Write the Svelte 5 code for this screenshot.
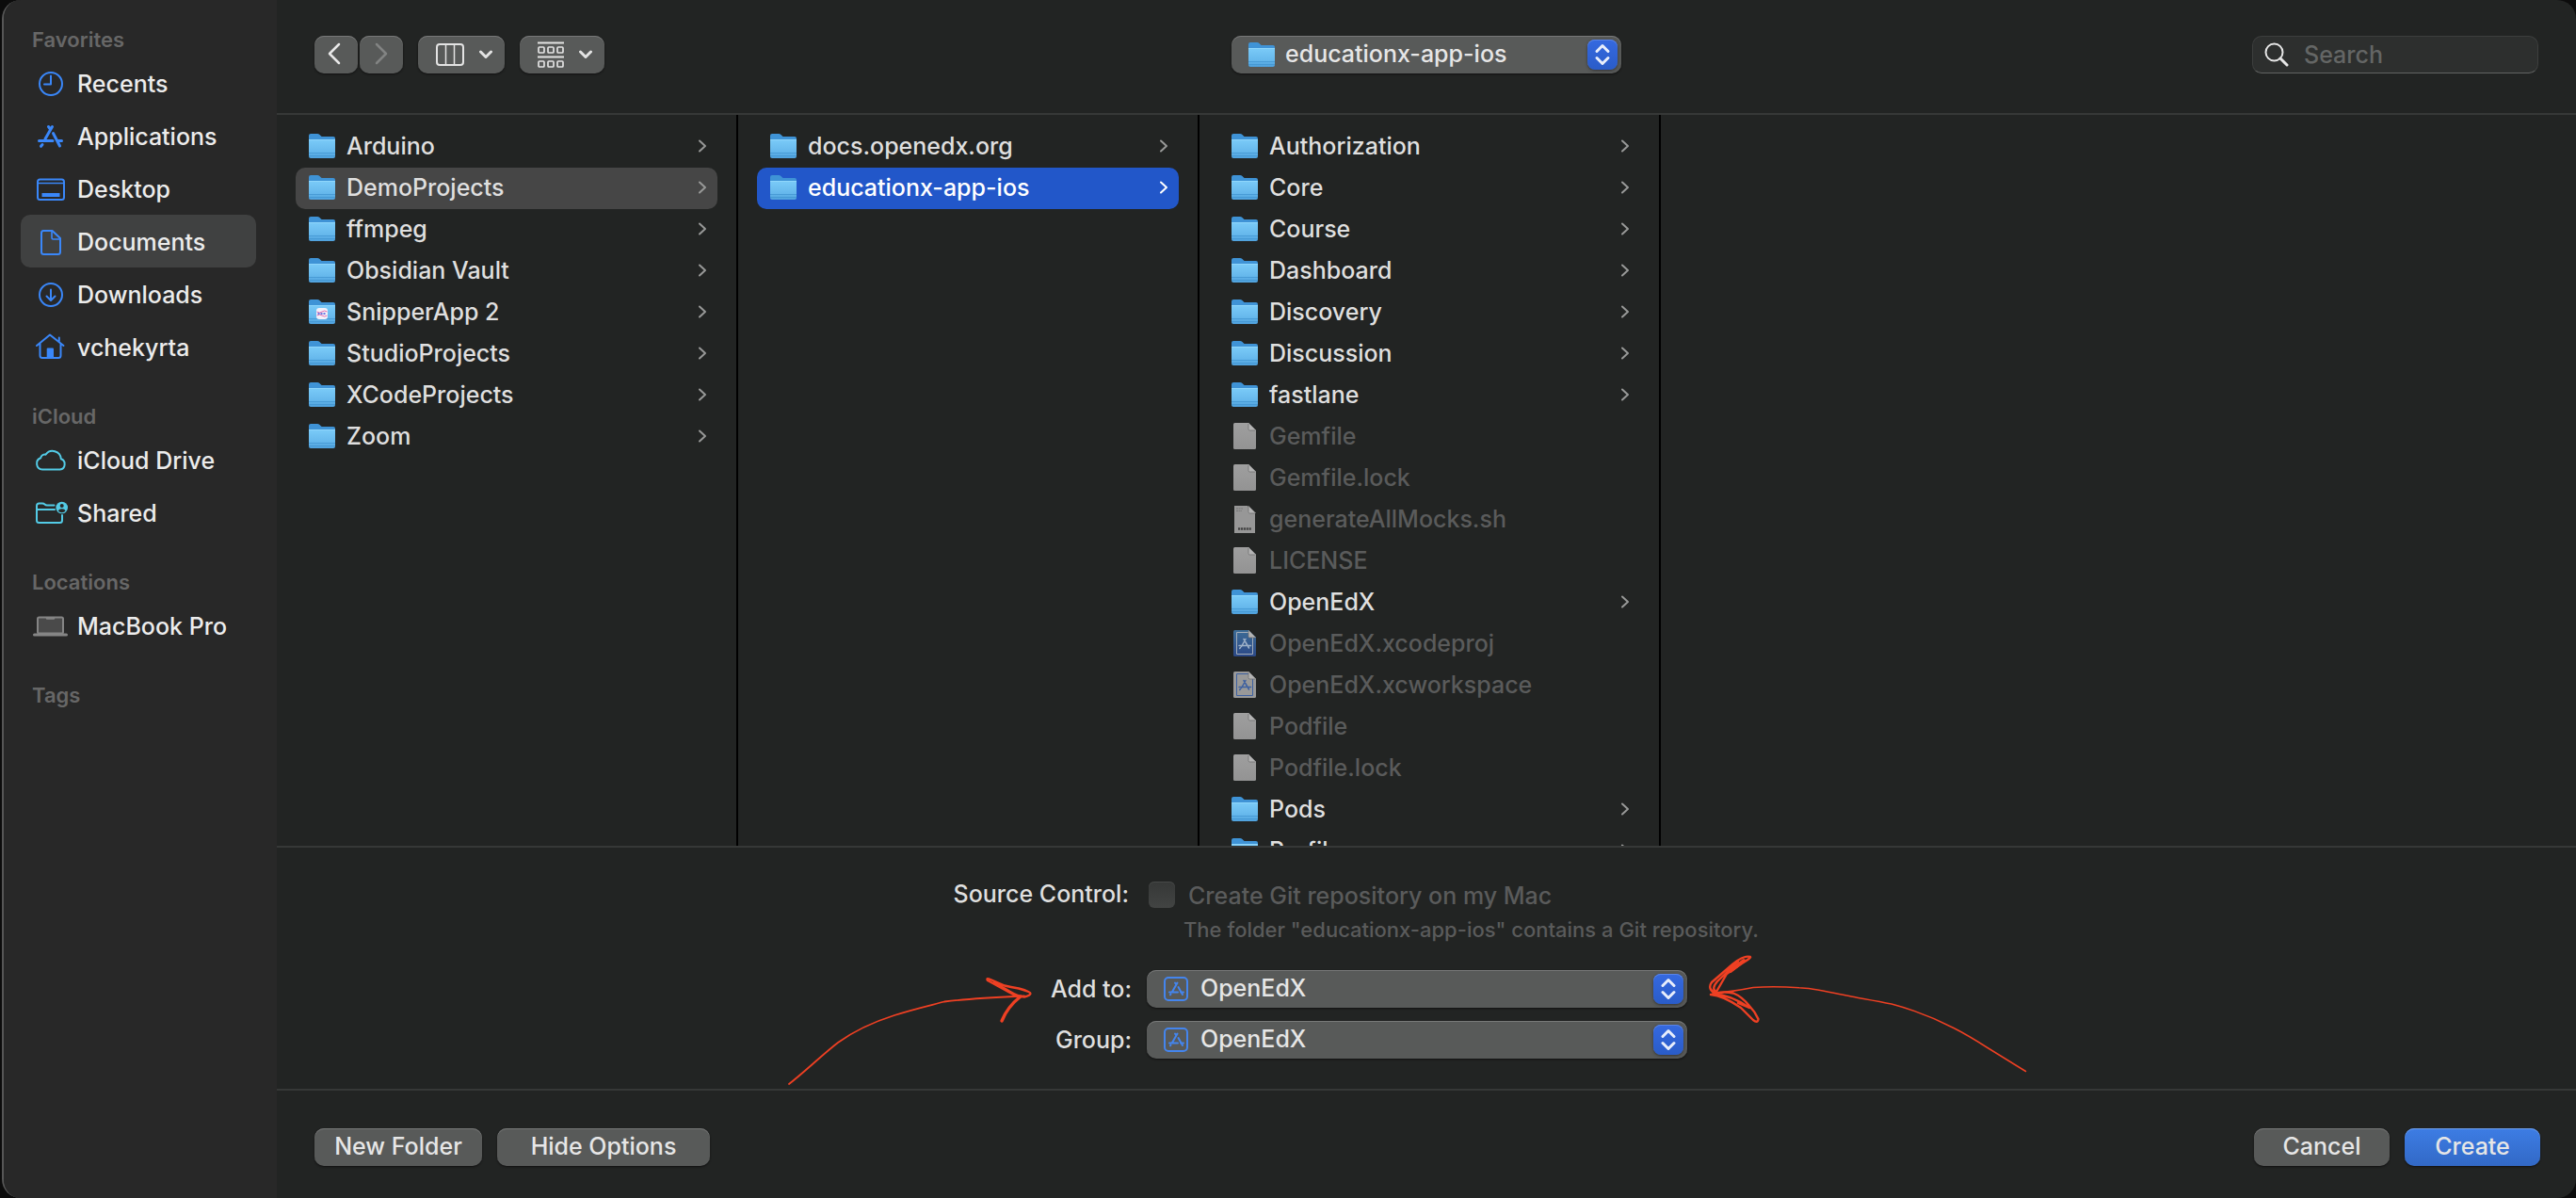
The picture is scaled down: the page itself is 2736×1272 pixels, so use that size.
<script>
  const sections = [
    {
      title: 'Favorites',
      items: [
        { name: 'Recents', icon: 'clock' },
        { name: 'Applications', icon: 'apps' },
        { name: 'Desktop', icon: 'desktop' },
        { name: 'Documents', icon: 'document' },
        { name: 'Downloads', icon: 'download' },
        { name: 'vchekyrta', icon: 'home' }
      ]
    },
    {
      title: 'iCloud',
      items: [
        { name: 'iCloud Drive', icon: 'cloud' },
        { name: 'Shared', icon: 'shared' }
      ]
    },
    { title: 'Locations', items: [{ name: 'MacBook Pro', icon: 'laptop' }] },
    { title: 'Tags', items: [] }
  ];

  const folder = (name, extra = {}) => ({ name, kind: 'folder', ...extra });
  const file = (name, kind = 'file') => ({ name, kind });

  const columns = [
    [
      folder('Arduino'),
      folder('DemoProjects', { state: 'open' }),
      folder('ffmpeg'),
      folder('Obsidian Vault'),
      folder('SnipperApp 2', { badge: true }),
      folder('StudioProjects'),
      folder('XCodeProjects'),
      folder('Zoom')
    ],
    [folder('docs.openedx.org'), folder('educationx-app-ios', { state: 'selected' })],
    [
      folder('Authorization'),
      folder('Core'),
      folder('Course'),
      folder('Dashboard'),
      folder('Discovery'),
      folder('Discussion'),
      folder('fastlane'),
      file('Gemfile'),
      file('Gemfile.lock'),
      file('generateAllMocks.sh', 'shell'),
      file('LICENSE'),
      folder('OpenEdX'),
      file('OpenEdX.xcodeproj', 'project'),
      file('OpenEdX.xcworkspace', 'workspace'),
      file('Podfile'),
      file('Podfile.lock'),
      folder('Pods'),
      folder('Profile')
    ]
  ];

  let place = $state('Documents');
</script>

{#snippet folderIcon(badge)}
  <svg class="file-icon" viewBox="0 0 28 28" aria-hidden="true">
    <path d="M0 3q0-2 2-2h7q1.500 0 2.500 1l1.500 1.500q.5.500 1.500.500H26q2 0 2 2v4H0z" fill="#3f93d6" />
    <path d="M0 7.500q0-.5.800-.5h26.400q.8 0 .8.500V25q0 2-2 2H2q-2 0-2-2z" fill="url(#folder-face)" />
    <path d="M0 7.500h28" stroke="#8fd6fb" stroke-width="1" />
    <path d="M0 21.500h28M0 24.500h28" stroke="#3f93cf" stroke-width="1" opacity=".7" />
    {#if badge}
      <rect x="8" y="10" width="12" height="12" rx="3" fill="#f4f1fa" />
      <path d="M8.500 14q3 2 5.500 0t5.500 0M8.500 18q3-2 5.500 0t5.500 0" fill="none" stroke="#e66fae" stroke-width="1" />
      <path d="M9.500 16h9" stroke="#6a78e0" stroke-width="2" stroke-dasharray="2 1" />
    {/if}
  </svg>
{/snippet}

{#snippet fileIcon(kind)}
  <svg class="file-icon" viewBox="0 0 28 28" aria-hidden="true">
    {#if kind === 'project'}
      <path d="M2 1.500Q2 0 3.500 0H18l8 8v18.500q0 1.500-1.500 1.500h-21Q2 28 2 26.500z" fill="url(#project-face)" />
      <path d="M5.500 2.500h13v5h4v18h-17z" fill="none" stroke="#a3acb8" stroke-width="1" />
    {:else if kind === 'workspace'}
      <path d="M2 1.500Q2 0 3.500 0H18l8 8v18.500q0 1.500-1.500 1.500h-21Q2 28 2 26.500z" fill="#999" />
      <path d="M5.500 2.500h13v5h4v18h-17z" fill="none" stroke="#3d60a0" stroke-width="1" />
    {:else if kind === 'shell'}
      <path d="M3 0h14l8 8v21H3z" fill="#979797" />
      <path d="M5 3h7M5 5.500h6" stroke="#777" stroke-width="1.200" stroke-dasharray="2 .6" />
      <path d="M7 24.500h14" stroke="#444" stroke-width="2.600" stroke-dasharray="2.200 .7" />
    {:else}
      <path d="M2 1.500Q2 0 3.500 0H18l8 8v18.500q0 1.500-1.500 1.500h-21Q2 28 2 26.500z" fill="url(#paper-face)" />
    {/if}
    <path d="M18 0v6.500q0 1.500 1.500 1.500H26z" fill="#b4b4b4" />
    <path d="M18 1v5.500q0 1.500 1.500 1.500H25" fill="none" stroke="#707070" stroke-width=".8" />
    {#if kind === 'project' || kind === 'workspace'}
      <g
        fill="none"
        stroke={kind === 'project' ? '#9fb2c8' : '#3d60a0'}
        stroke-width="1.500"
        stroke-linecap="round"
      >
        <path d="M15 9.500l-4.500 8M13 9.500l5.500 9.500M8 16.500h7.500M18 16.500h2.500M9.500 18.500l-.8 1" />
      </g>
    {/if}
  </svg>
{/snippet}

{#snippet placeIcon(name)}
  <svg class="place-icon {name}" viewBox="0 0 40 40" aria-hidden="true">
    {#if name === 'clock'}
      <circle cx="21" cy="21" r="12" />
      <path d="M21 12.500V21.500H14" />
    {:else if name === 'apps'}
      <g stroke-width="3">
        <path d="M22.500 10.500L15 23.500M18.500 10.500l1.500 2M23.500 17.500l7 13.500M8.500 25.500H23M28 25.500h4.500M12 29.500l-1.500 1.800" />
      </g>
    {:else if name === 'desktop'}
      <rect x="7" y="10.500" width="28" height="21.500" rx="2.500" />
      <path d="M7 14.500h28" stroke-width="1.500" />
      <path d="M11.500 27h19" stroke-width="4" stroke-linecap="butt" />
    {:else if name === 'document'}
      <path d="M13 9h9.500L31 17v14.500q0 2.500-2.500 2.500h-15Q11 34 11 31.500V11.500Q11 9 13 9z" />
      <path d="M22 9v7.500q0 1.500 1.500 1.500H31" stroke-width="1.600" />
    {:else if name === 'download'}
      <circle cx="21" cy="21" r="12" />
      <path d="M21 15.500v11M16.500 22.500l4.500 4.500 4.500-4.500" />
    {:else if name === 'home'}
      <path d="M6 19L20 7.500 34.500 19M9.500 17v12.500q0 2.500 2.500 2.500h17q2.500 0 2.500-2.500V17M29.800 14.500V10.500" />
      <path d="M16.700 32V22.500q0-1 1-1h5.300q1 0 1 1V32z" fill="currentColor" stroke="none" />
    {:else if name === 'cloud'}
      <path d="M12 30.500a6.300 6.300 0 0 1-1.800-12.200 4.600 4.600 0 0 1 5.300-3.600 9 9 0 0 1 16.300 4.600 5.800 5.800 0 0 1-1 11.200z" />
    {:else if name === 'shared'}
      <path d="M24.500 12.500H17q-1.500 0-2.500-1t-2.500-1H8.500Q6 10.500 6 13v15.500Q6 31 8.500 31h22q2.500 0 2.500-2.500V23M6 17h19" />
      <circle cx="32.700" cy="15" r="6.300" fill="currentColor" stroke="none" />
      <circle cx="32.700" cy="13" r="2" fill="#282828" stroke="none" />
      <path d="M28.800 18.600q.8-2.300 3.900-2.300t3.900 2.300q-1.500 1.600-3.900 1.600t-3.900-1.600z" fill="#282828" stroke="none" />
    {:else}
      <rect x="7" y="11.500" width="27" height="17" rx="1.500" fill="#4a4a4a" />
      <path d="M17 12.500h7" stroke-width="2.500" />
      <path d="M3.500 30h34" stroke-width="3" />
    {/if}
  </svg>
{/snippet}

{#snippet stepper()}
  <svg class="stepper" viewBox="0 0 32 32" aria-hidden="true">
    <path d="M10 12.500l6-6 6 6M10 19.500l6 6 6-6" />
  </svg>
{/snippet}

{#snippet downChevron()}
  <svg width="14" height="10" viewBox="0 0 14 10" aria-hidden="true">
    <path d="M1.500 2L7 7.500 12.500 2" fill="none" stroke="#e3e3e3" stroke-width="3" stroke-linecap="round" stroke-linejoin="round" />
  </svg>
{/snippet}

{#snippet targetIcon()}
  <svg class="target-icon" viewBox="0 0 26 26" aria-hidden="true">
    <rect x="1" y="1" width="24" height="24" rx="4" />
    <path d="M14.500 6.500l-5.500 9.500M12 6.500l1 1.500M15.500 11l4.500 8M6 16.500h9M18 16.500h3M7.500 18.500l-.5.800" stroke-linecap="round" />
  </svg>
{/snippet}

<svg class="defs" aria-hidden="true">
  <defs>
    <linearGradient id="folder-face" x1="0" y1="0" x2="0" y2="1">
      <stop offset="0" stop-color="#7bcbf8" />
      <stop offset=".65" stop-color="#66b8ec" />
      <stop offset="1" stop-color="#4ea0dc" />
    </linearGradient>
    <linearGradient id="project-face" x1="0" y1="0" x2="0" y2="1">
      <stop offset="0" stop-color="#3d6c96" />
      <stop offset="1" stop-color="#2b4886" />
    </linearGradient>
    <linearGradient id="paper-face" x1="0" y1="0" x2="0" y2="1">
      <stop offset="0" stop-color="#9f9f9f" />
      <stop offset="1" stop-color="#939393" />
    </linearGradient>
  </defs>
</svg>

<div class="dialog">
  <nav class="sidebar" aria-label="Places">
    {#each sections as section}
      <section>
        <h2>{section.title}</h2>
        {#each section.items as item}
          <button class="place" class:current={place === item.name} onclick={() => (place = item.name)}>
            {@render placeIcon(item.icon)}
            <span>{item.name}</span>
          </button>
        {/each}
      </section>
    {/each}
  </nav>

  <main>
    <header class="toolbar">
      <div class="tools">
        <div class="history">
          <button class="push nav back" aria-label="Back">
            <svg width="14" height="24" viewBox="0 0 14 24"><path d="M12 2L2 12l10 10" /></svg>
          </button>
          <button class="push nav" aria-label="Forward" disabled>
            <svg width="14" height="24" viewBox="0 0 14 24"><path d="M2 2l10 10L2 22" /></svg>
          </button>
        </div>
        <button class="push view" aria-label="Column view">
          <svg width="30" height="24" viewBox="0 0 30 24" fill="none" stroke="#e3e3e3" stroke-width="2">
            <rect x="1" y="1" width="28" height="22" rx="3" />
            <path d="M10.500 1v22M19.500 1v22" stroke-width="1.500" />
          </svg>
          {@render downChevron()}
        </button>
        <button class="push view" aria-label="Group items">
          <svg width="28" height="28" viewBox="0 0 28 28" fill="none" stroke="#e3e3e3">
            <path d="M0 1.500h28M0 16.500h28" stroke-width="2" />
            {#each [0, 10, 20] as x}
              <rect x={x + 1} y="6" width="6" height="6" rx="1" stroke-width="1.700" />
              <rect x={x + 1} y="21" width="6" height="6" rx="1" stroke-width="1.700" />
            {/each}
          </svg>
          {@render downChevron()}
        </button>
      </div>

      <div class="popup">
        <select aria-label="Current folder">
          <option>educationx-app-ios</option>
        </select>
        <span class="lead">{@render folderIcon(false)}</span>
        {@render stepper()}
      </div>

      <label class="search">
        <svg width="26" height="26" viewBox="0 0 26 26" aria-hidden="true">
          <circle cx="10.500" cy="10.500" r="9" />
          <path d="M17 17l7 7" stroke-width="3" />
        </svg>
        <input type="search" placeholder="Search" aria-label="Search" />
      </label>
    </header>

    <div class="browser">
      {#each columns as column}
        <ul>
          {#each column as entry}
            <li>
              <button
                class="entry"
                class:open={entry.state === 'open'}
                class:selected={entry.state === 'selected'}
                disabled={entry.kind !== 'folder'}
              >
                {#if entry.kind === 'folder'}
                  {@render folderIcon(entry.badge)}
                {:else}
                  {@render fileIcon(entry.kind)}
                {/if}
                <span>{entry.name}</span>
                {#if entry.kind === 'folder'}
                  <svg class="more" viewBox="0 0 10 14" aria-hidden="true"><path d="M2 1.500L8 7l-6 5.500" /></svg>
                {/if}
              </button>
            </li>
          {/each}
        </ul>
      {/each}
    </div>

    <form class="options" onsubmit={(e) => e.preventDefault()}>
      <span class="caption source">Source Control:</span>
      <div class="check">
        <input type="checkbox" id="git" disabled />
        <label for="git">Create Git repository on my Mac</label>
      </div>
      <p class="hint">The folder "educationx-app-ios" contains a Git repository.</p>

      <label class="caption" for="add-to">Add to:</label>
      <div class="popup target">
        <select id="add-to"><option>OpenEdX</option></select>
        <span class="lead">{@render targetIcon()}</span>
        {@render stepper()}
      </div>

      <label class="caption group" for="group">Group:</label>
      <div class="popup target group">
        <select id="group"><option>OpenEdX</option></select>
        <span class="lead">{@render targetIcon()}</span>
        {@render stepper()}
      </div>

      <svg class="marks" viewBox="294 900 2442 256" aria-hidden="true">
        <path d="M838 1151C856 1137 872 1121 890 1107C908 1094 928 1085 950 1078C968 1072 990 1067 1003 1063.500C1030 1060 1055 1059 1088 1057.500" stroke-width="1.800" />
        <path d="M1080 1058L1049 1041Q1047 1038 1052 1040L1067 1046.500Q1073 1048 1082 1049.500Q1095 1053 1094.500 1055T1088 1058.500Q1081 1058 1073 1053L1056 1043" stroke-width="2.400" />
        <path d="M1084 1058Q1070 1069 1064 1084" stroke-width="3.400" />
        <path d="M2151.500 1137.500L2111 1112.500Q2090 1099 2075 1091.500Q2043 1075 2009 1066C1990 1062 1970 1059 1964 1057.500C1945 1054 1925 1049 1911 1048.800Q1885 1047 1862 1048.500Q1840 1053 1822 1054" stroke-width="1.500" />
        <path d="M1822 1055Q1813 1050 1818 1043L1840 1024Q1852 1014 1859 1016Q1860 1017 1850 1023L1834 1034L1823 1053Q1817 1050 1824 1042L1846 1021" stroke-width="2.400" />
        <path d="M1852 1020L1838 1031" stroke-width="4" />
        <path d="M1817 1056Q1830 1057 1849 1070L1862 1083Q1867 1087 1867.500 1082Q1864 1074 1858 1068Q1850 1058 1841 1054.500Q1830 1052 1819 1055.500Q1838 1056 1858 1070L1846 1065" stroke-width="2.400" />
      </svg>
    </form>

    <footer>
      <div class="actions">
        <button class="push new">New Folder</button>
        <button class="push hide">Hide Options</button>
      </div>
      <div class="actions">
        <button class="push confirm">Cancel</button>
        <button class="push confirm primary">Create</button>
      </div>
    </footer>
  </main>
</div>

<style>
  :global(body) {
    background: #0c0c0c;
  }

  * {
    box-sizing: border-box;
  }

  .defs {
    position: absolute;
    width: 0;
    height: 0;
  }

  .dialog {
    display: grid;
    grid-template-columns: 290px minmax(0, 1fr);
    height: 100vh;
    min-height: 800px;
    margin-left: 2px;
    border-left: 2px solid #565656;
    border-radius: 20px;
    overflow: hidden;
    background: #222423;
    color: #dfdfdf;
    font-family: Inter, 'Liberation Sans', sans-serif;
    font-size: 25px;
    font-weight: 500;
    line-height: 32px;
  }

  button,
  input,
  select {
    font: inherit;
    color: inherit;
  }

  .sidebar {
    display: flex;
    flex-direction: column;
    gap: 26px;
    padding: 22px 22px 22px 18px;
    background: #282828;
  }

  h2 {
    margin: 0;
    padding: 2px 0 0 12px;
    color: #676767;
    font-size: 22px;
    font-weight: 600;
    line-height: 36px;
  }

  .place {
    display: flex;
    align-items: center;
    gap: 9px;
    width: 100%;
    height: 56px;
    padding: 0 11px;
    border: 0;
    border-radius: 10px;
    background: none;
    color: #ececec;
    text-align: left;
    white-space: nowrap;
  }

  .place.current {
    background: #404141;
  }

  .place span {
    padding-top: 2px;
  }

  .place-icon {
    flex: none;
    width: 40px;
    height: 40px;
    color: #3a87f9;
    fill: none;
    stroke: currentColor;
    stroke-width: 2;
    stroke-linecap: round;
    stroke-linejoin: round;
  }

  .place-icon.cloud,
  .place-icon.shared {
    color: #53cbe6;
  }

  .place-icon.laptop {
    color: #858585;
  }

  main {
    display: flex;
    flex-direction: column;
    min-width: 0;
    min-height: 0;
  }

  .toolbar {
    display: grid;
    grid-template-columns: 1fr 414px 1fr;
    align-items: center;
    padding: 38px 40px 42px;
    border-bottom: 2px solid #363837;
  }

  .tools {
    display: flex;
    gap: 16px;
  }

  .history {
    display: flex;
    gap: 2px;
  }

  .push {
    display: flex;
    align-items: center;
    justify-content: center;
    height: 40px;
    padding: 0 0 2px;
    border: 0;
    border-radius: 10px;
    background: #585a59;
    box-shadow: inset 0 1px #787979, 0 1px 2px #111;
    color: #e6e6e6;
    white-space: nowrap;
  }

  .nav {
    width: 46px;
  }

  .back {
    padding-right: 4px;
  }

  .nav path {
    fill: none;
    stroke: #e8e8e8;
    stroke-width: 2.5;
    stroke-linecap: round;
    stroke-linejoin: round;
  }

  .nav:disabled path {
    stroke: #828483;
  }

  .view {
    gap: 16px;
    padding: 0 13px 0 19px;
  }

  .popup {
    display: grid;
    grid-template-columns: minmax(0, 1fr) auto;
    align-items: center;
    height: 40px;
    border-radius: 10px;
    background: #585a59;
    box-shadow: inset 0 1px #787979, 0 1px 2px #111;
  }

  .popup select {
    grid-area: 1 / 1 / 2 / 3;
    width: 100%;
    height: 40px;
    padding: 0 44px 2px 57px;
    border: 0;
    border-radius: 10px;
    background: none;
    color: #e6e6e6;
    appearance: none;
  }

  .popup .lead {
    display: flex;
    grid-area: 1 / 1;
    padding-left: 18px;
    pointer-events: none;
  }

  .stepper {
    grid-area: 1 / 2;
    width: 32px;
    height: 32px;
    margin-right: 4px;
    border-radius: 8px;
    background: linear-gradient(#3569e0, #2a5cc8);
    box-shadow: inset 0 1px #5c86e6, 0 1px 3px #333;
    fill: none;
    stroke: #e8eefb;
    stroke-width: 3;
    stroke-linecap: round;
    stroke-linejoin: round;
    pointer-events: none;
  }

  .target-icon {
    width: 26px;
    height: 26px;
    fill: none;
    stroke: #4485ee;
    stroke-width: 2;
  }

  .search {
    display: flex;
    align-items: center;
    justify-self: end;
    gap: 16px;
    width: 304px;
    height: 40px;
    padding: 0 12px;
    border: 1px solid #3d3f3e;
    border-bottom-color: #626463;
    border-radius: 10px;
    background: #2d2f2e;
  }

  .search svg {
    flex: none;
    fill: none;
    stroke: #e6e6e6;
    stroke-width: 2;
    stroke-linecap: round;
  }

  .search input {
    width: 100%;
    min-width: 0;
    padding: 0;
    border: 0;
    outline: 0;
    background: none;
    appearance: none;
  }

  .search input::placeholder {
    color: #646665;
    opacity: 1;
  }

  .browser {
    display: flex;
    flex: 1 1 0;
    min-height: 0;
    overflow: hidden;
  }

  ul {
    flex: none;
    width: 490px;
    margin: 0;
    padding: 12px 20px;
    border-right: 2px solid #000;
    list-style: none;
  }

  .entry {
    display: flex;
    align-items: center;
    gap: 12px;
    width: 100%;
    height: 44px;
    padding: 0 11px 2px 14px;
    border: 0;
    border-radius: 10px;
    background: none;
    text-align: left;
    white-space: nowrap;
  }

  .entry span {
    flex: 1;
  }

  .entry.open {
    background: #464646;
  }

  .entry.selected {
    background: #2257c9;
    color: #fff;
  }

  .entry:disabled {
    color: #5a5b5b;
  }

  .file-icon {
    flex: none;
    width: 28px;
    height: 28px;
    overflow: visible;
  }

  .more {
    flex: none;
    width: 10px;
    height: 14px;
    fill: none;
    stroke: #989998;
    stroke-width: 2;
    stroke-linecap: round;
    stroke-linejoin: round;
  }

  .selected .more {
    stroke: #fff;
  }

  .options {
    position: relative;
    display: grid;
    grid-template-columns: 908fr 574px 928fr;
    column-gap: 16px;
    align-items: center;
    padding: 30px 0 32px;
    border-top: 2px solid #363837;
    white-space: nowrap;
  }

  .caption {
    grid-column: 1;
    justify-self: end;
  }

  .caption.source {
    padding: 0 3px 2px 0;
  }

  .target {
    grid-column: 2;
  }

  .check {
    display: flex;
    grid-column: 2 / 4;
    align-items: center;
    gap: 14px;
    height: 40px;
    padding-left: 2px;
    color: #5a5b5b;
  }

  .check label {
    padding-top: 2px;
  }

  .check input {
    width: 28px;
    height: 28px;
    margin: 0;
    border-radius: 6px;
    background: linear-gradient(#363837, #424443);
    box-shadow: inset 0 1px #474948;
    appearance: none;
  }

  .hint {
    grid-column: 2 / 4;
    margin: 0 0 26px;
    padding-left: 39px;
    color: #5a5b5b;
    font-size: 22px;
    line-height: 34px;
  }

  .group {
    margin-top: 14px;
  }

  .marks {
    position: absolute;
    inset: 0;
    width: 100%;
    height: 100%;
    fill: none;
    stroke: #ee4023;
    stroke-linecap: round;
    stroke-linejoin: round;
    pointer-events: none;
  }

  footer {
    display: flex;
    justify-content: space-between;
    padding: 40px 38px 34px 40px;
    border-top: 2px solid #363837;
  }

  .actions {
    display: flex;
    gap: 16px;
  }

  .new {
    width: 178px;
  }

  .hide {
    width: 226px;
  }

  .confirm {
    width: 144px;
  }

  .primary {
    background: linear-gradient(#3d7de4, #3269c6);
    box-shadow: inset 0 1px #6fa0ee, 0 1px 2px #111;
  }
</style>
